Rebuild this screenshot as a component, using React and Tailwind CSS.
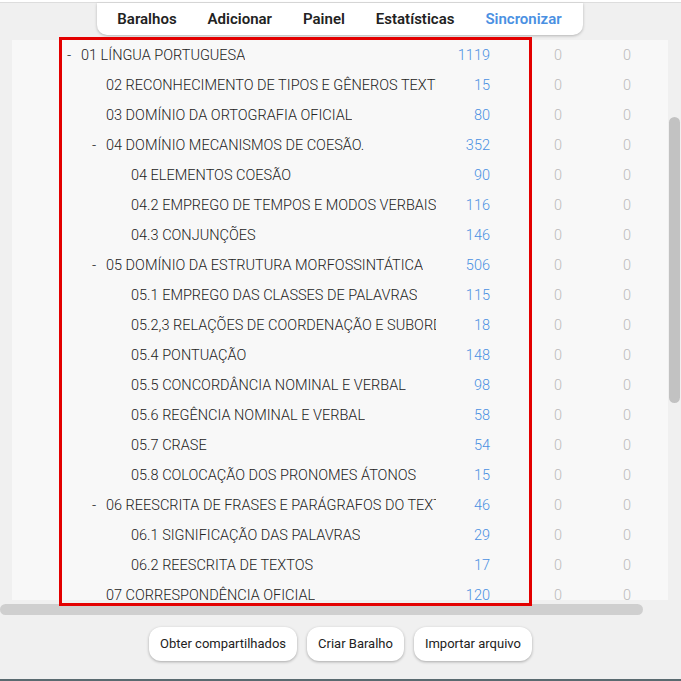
const rows = [
  [0, true, "01 LÍNGUA PORTUGUESA", 1119],
  [1, false, "02 RECONHECIMENTO DE TIPOS E GÊNEROS TEXTUAIS", 15],
  [1, false, "03 DOMÍNIO DA ORTOGRAFIA OFICIAL", 80],
  [1, true, "04 DOMÍNIO MECANISMOS DE COESÃO.", 352],
  [2, false, "04 ELEMENTOS COESÃO", 90],
  [2, false, "04.2 EMPREGO DE TEMPOS E MODOS VERBAIS", 116],
  [2, false, "04.3 CONJUNÇÕES", 146],
  [1, true, "05 DOMÍNIO DA ESTRUTURA MORFOSSINTÁTICA", 506],
  [2, false, "05.1 EMPREGO DAS CLASSES DE PALAVRAS", 115],
  [2, false, "05.2,3 RELAÇÕES DE COORDENAÇÃO E SUBORDINAÇÃO", 18],
  [2, false, "05.4 PONTUAÇÃO", 148],
  [2, false, "05.5 CONCORDÂNCIA NOMINAL E VERBAL", 98],
  [2, false, "05.6 REGÊNCIA NOMINAL E VERBAL", 58],
  [2, false, "05.7 CRASE", 54],
  [2, false, "05.8 COLOCAÇÃO DOS PRONOMES ÁTONOS", 15],
  [1, true, "06 REESCRITA DE FRASES E PARÁGRAFOS DO TEXTO", 46],
  [2, false, "06.1 SIGNIFICAÇÃO DAS PALAVRAS", 29],
  [2, false, "06.2 REESCRITA DE TEXTOS", 17],
  [1, false, "07 CORRESPONDÊNCIA OFICIAL", 120],
];
const pads = ["pl-[8px]", "pl-[33px]", "pl-[58px]"];

export default function App() {
  return (
    <div className="w-[681px] h-[681px] bg-[#f0f0f0] relative overflow-hidden text-[#222]" style={{ fontFamily: "Roboto, 'Liberation Sans', sans-serif" }}>
      <div className="h-[3px] bg-white border-b border-[#ddd]" />
      <div className="flex justify-center">
        <div className="w-[486px] h-[32px] ml-[-2px] bg-white rounded-b-[10px] shadow-[0_1px_3px_rgba(0,0,0,0.25)] flex items-center justify-center gap-[31px] text-[15px] font-semibold">
          <span>Baralhos</span><span>Adicionar</span><span>Painel</span><span>Estatísticas</span><span className="text-[#4a90e2]">Sincronizar</span>
        </div>
      </div>
      <div className="flex mt-[5px] h-[560px]">
        <div className="w-[12px]" />
        <div className="w-[656px] bg-[#f8f8f8] overflow-hidden">
          <div className="mt-[1px]">
            {rows.map(([lvl, exp, name, n], i) => (
              <div key={i} className="h-[30px] flex items-center text-[14.5px] font-light">
                <div className="w-[47px] shrink-0" />
                <div className={`w-[377px] shrink-0 flex items-center overflow-hidden whitespace-nowrap ${pads[lvl]}`}>
                  <span className="w-[14px] shrink-0">{exp ? "-" : ""}</span>
                  <span className="overflow-hidden">{name}</span>
                </div>
                <div className="w-[54px] shrink-0 text-right text-[#4a90e2]">{n}</div>
                <div className="w-[75px] shrink-0 text-right pr-[3px] text-[#bbb]">0</div>
                <div className="w-[66px] shrink-0 text-right text-[#bbb]">0</div>
              </div>
            ))}
          </div>
        </div>
        <div className="w-[13px] relative">
          <div className="absolute left-[1px] right-[1px] top-[77px] h-[286px] bg-[#c2c2c2] rounded-full" />
        </div>
      </div>
      <div className="absolute left-[59px] top-[37px] w-[473px] h-[569px] border-[3px] border-[#e30000]" />
      <div className="mt-[4px] w-[643px] h-[11px] bg-[#cfcfcf] rounded-full" />
      <div className="flex justify-center gap-[10px] mt-[12px] text-[13px]">
        {["Obter compartilhados", "Criar Baralho", "Importar arquivo"].map((t) => (
          <div key={t} className="h-[34px] px-[11px] bg-white rounded-[12px] shadow-[0_1px_3px_rgba(0,0,0,0.3)] flex items-center">{t}</div>
        ))}
      </div>
      <div className="absolute bottom-0 left-0 right-0 h-[2px] bg-[#5a6a70]" />
    </div>
  );
}
